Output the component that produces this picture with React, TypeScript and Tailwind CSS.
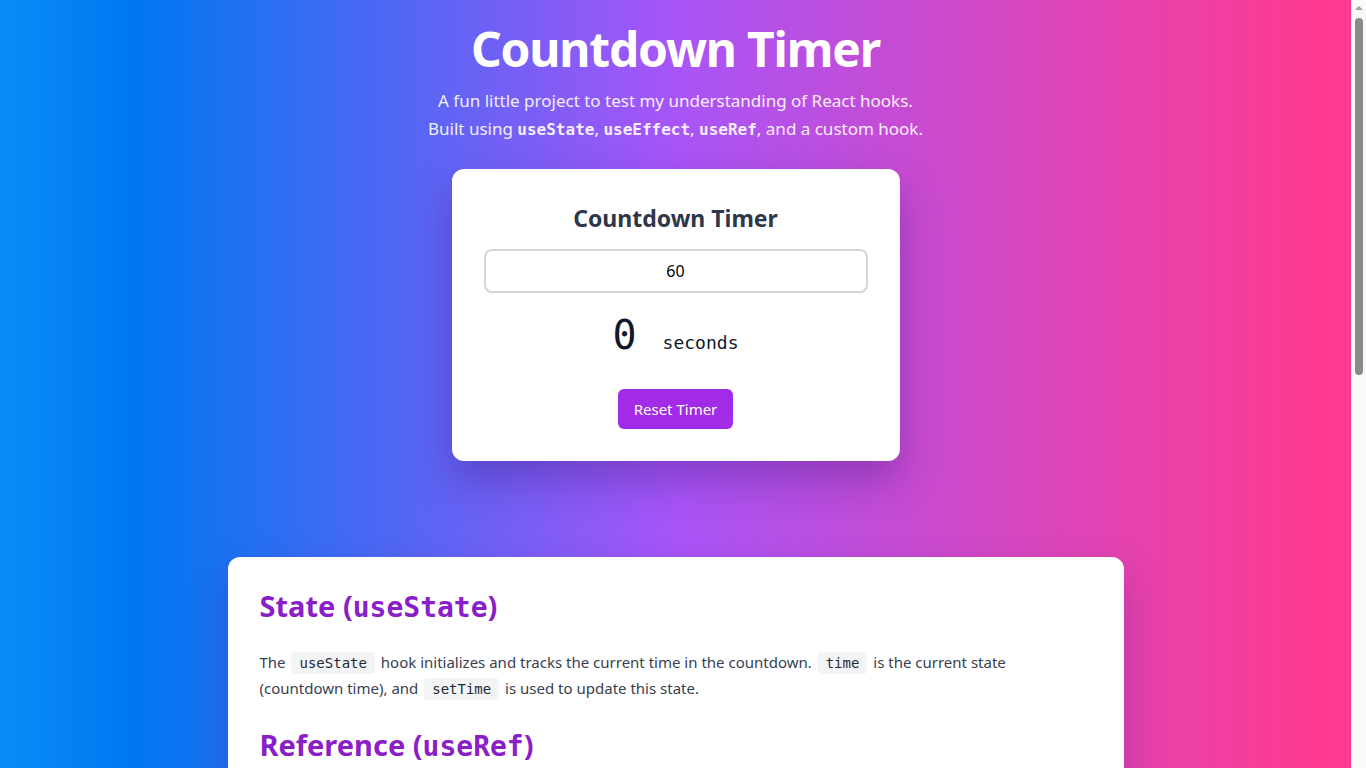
import React from "react";

const Code = ({ children }: { children: React.ReactNode }) => (
  <code className="rounded bg-[#f3f4f6] px-2 py-[3px] text-[14px] text-[#1f2937] [font-family:'DejaVu_Sans_Mono',monospace] mx-[2px]">
    {children}
  </code>
);

const B = ({ children }: { children: React.ReactNode }) => (
  <strong className="font-bold [font-family:'DejaVu_Sans_Mono',monospace] text-[16px]">{children}</strong>
);

const Mono = ({ children }: { children: React.ReactNode }) => (
  <span className="[font-family:'DejaVu_Sans_Mono',monospace] font-semibold text-[28px]">{children}</span>
);

export default function App() {
  return (
    <div className="flex h-screen w-full overflow-hidden [font-family:'Noto_Sans',sans-serif]">
      <div className="min-w-0 flex-1 overflow-hidden bg-[linear-gradient(to_right,#0a8cf8_0%,#0077f1_10%,#a855f7_50%,#ff3a8f_98%)]">
        <div className="flex flex-col items-center pt-[25px] pb-16">
          <h1 className="text-[48px] leading-none font-bold text-white tracking-[-1.2px]">Countdown Timer</h1>
          <p className="mt-[14px] text-center text-[17px] leading-[28px] text-white/90">
            A fun little project to test my understanding of React hooks.
            <br />
            Built using <B>useState</B>, <B>useEffect</B>, <B>useRef</B>, and a custom hook.
          </p>

          <div className="mt-[25px] w-[448px] rounded-xl bg-white px-8 pt-[33px] pb-8 shadow-[0_20px_40px_rgba(60,20,120,0.35)] flex flex-col items-center">
            <h2 className="text-[23px] leading-[32px] font-bold text-[#2d3748]">Countdown Timer</h2>
            <input
              readOnly
              value="60"
              className="mt-[15px] h-[44px] w-full rounded-lg border-2 border-[#d1d5db] text-center text-[16px] text-black outline-none"
            />
            <div className="mt-[16px] flex items-baseline justify-center gap-[26px] [font-family:'DejaVu_Sans_Mono',monospace] text-[#111827]">
              <span className="text-[40px] leading-[52px]">0</span>
              <span className="text-[18px]">seconds</span>
            </div>
            <button className="mt-[28px] h-[40px] rounded-md bg-[#a12be6] px-4 text-[15px] text-white">Reset Timer</button>
          </div>

          <div className="mt-[96px] w-[896px] rounded-xl bg-white px-8 pt-[31px] pb-8 shadow-[0_20px_40px_rgba(60,20,120,0.25)]">
            <h2 className="text-[29px] leading-[36px] font-bold text-[#8a1fc9]">
              State (<Mono>useState</Mono>)
            </h2>
            <p className="mt-[24px] text-[15px] leading-[25px] text-[#374151]">
              The <Code>useState</Code> hook initializes and tracks the current time in the countdown. <Code>time</Code> is the current state
              <br />
              (countdown time), and <Code>setTime</Code> is used to update this state.
            </p>

            <h2 className="mt-[25px] text-[29px] leading-[36px] font-bold text-[#8a1fc9]">
              Reference (<Mono>useRef</Mono>)
            </h2>
            <p className="mt-[24px] text-[15px] leading-[25px] text-[#374151]">
              The <Code>useRef</Code> hook stores the interval ID in <Code>intervalRef</Code>, so it persists between renders without
              causing a re-render when it changes. This lets us clear the interval when the timer is reset or reaches zero.
            </p>

            <h2 className="mt-[25px] text-[29px] leading-[36px] font-bold text-[#8a1fc9]">
              Effect (<Mono>useEffect</Mono>)
            </h2>
            <p className="mt-[24px] text-[15px] leading-[25px] text-[#374151]">
              The <Code>useEffect</Code> hook starts the interval when the component mounts and cleans it up when it unmounts. It
              also watches <Code>time</Code> and stops the countdown once it reaches <Code>0</Code>.
            </p>

            <h2 className="mt-[25px] text-[29px] leading-[36px] font-bold text-[#8a1fc9]">
              Custom Hook (<Mono>useCountdown</Mono>)
            </h2>
            <p className="mt-[24px] text-[15px] leading-[25px] text-[#374151]">
              All of the timer logic is wrapped inside a custom hook, <Code>useCountdown</Code>, which returns the current
              <Code>time</Code> and a <Code>reset</Code> function. This keeps the component clean and makes the logic reusable.
            </p>
          </div>
        </div>
      </div>

      <div className="flex w-[15px] shrink-0 flex-col items-center bg-[#f9f9f9]">
        <div className="mt-[6px] h-0 w-0 border-x-[4px] border-b-[4px] border-x-transparent border-b-[#a3a3a3]" />
        <div className="mt-[8px] h-[357px] w-[8px] rounded-full bg-[#8a8a8a]" />
      </div>
    </div>
  );
}
